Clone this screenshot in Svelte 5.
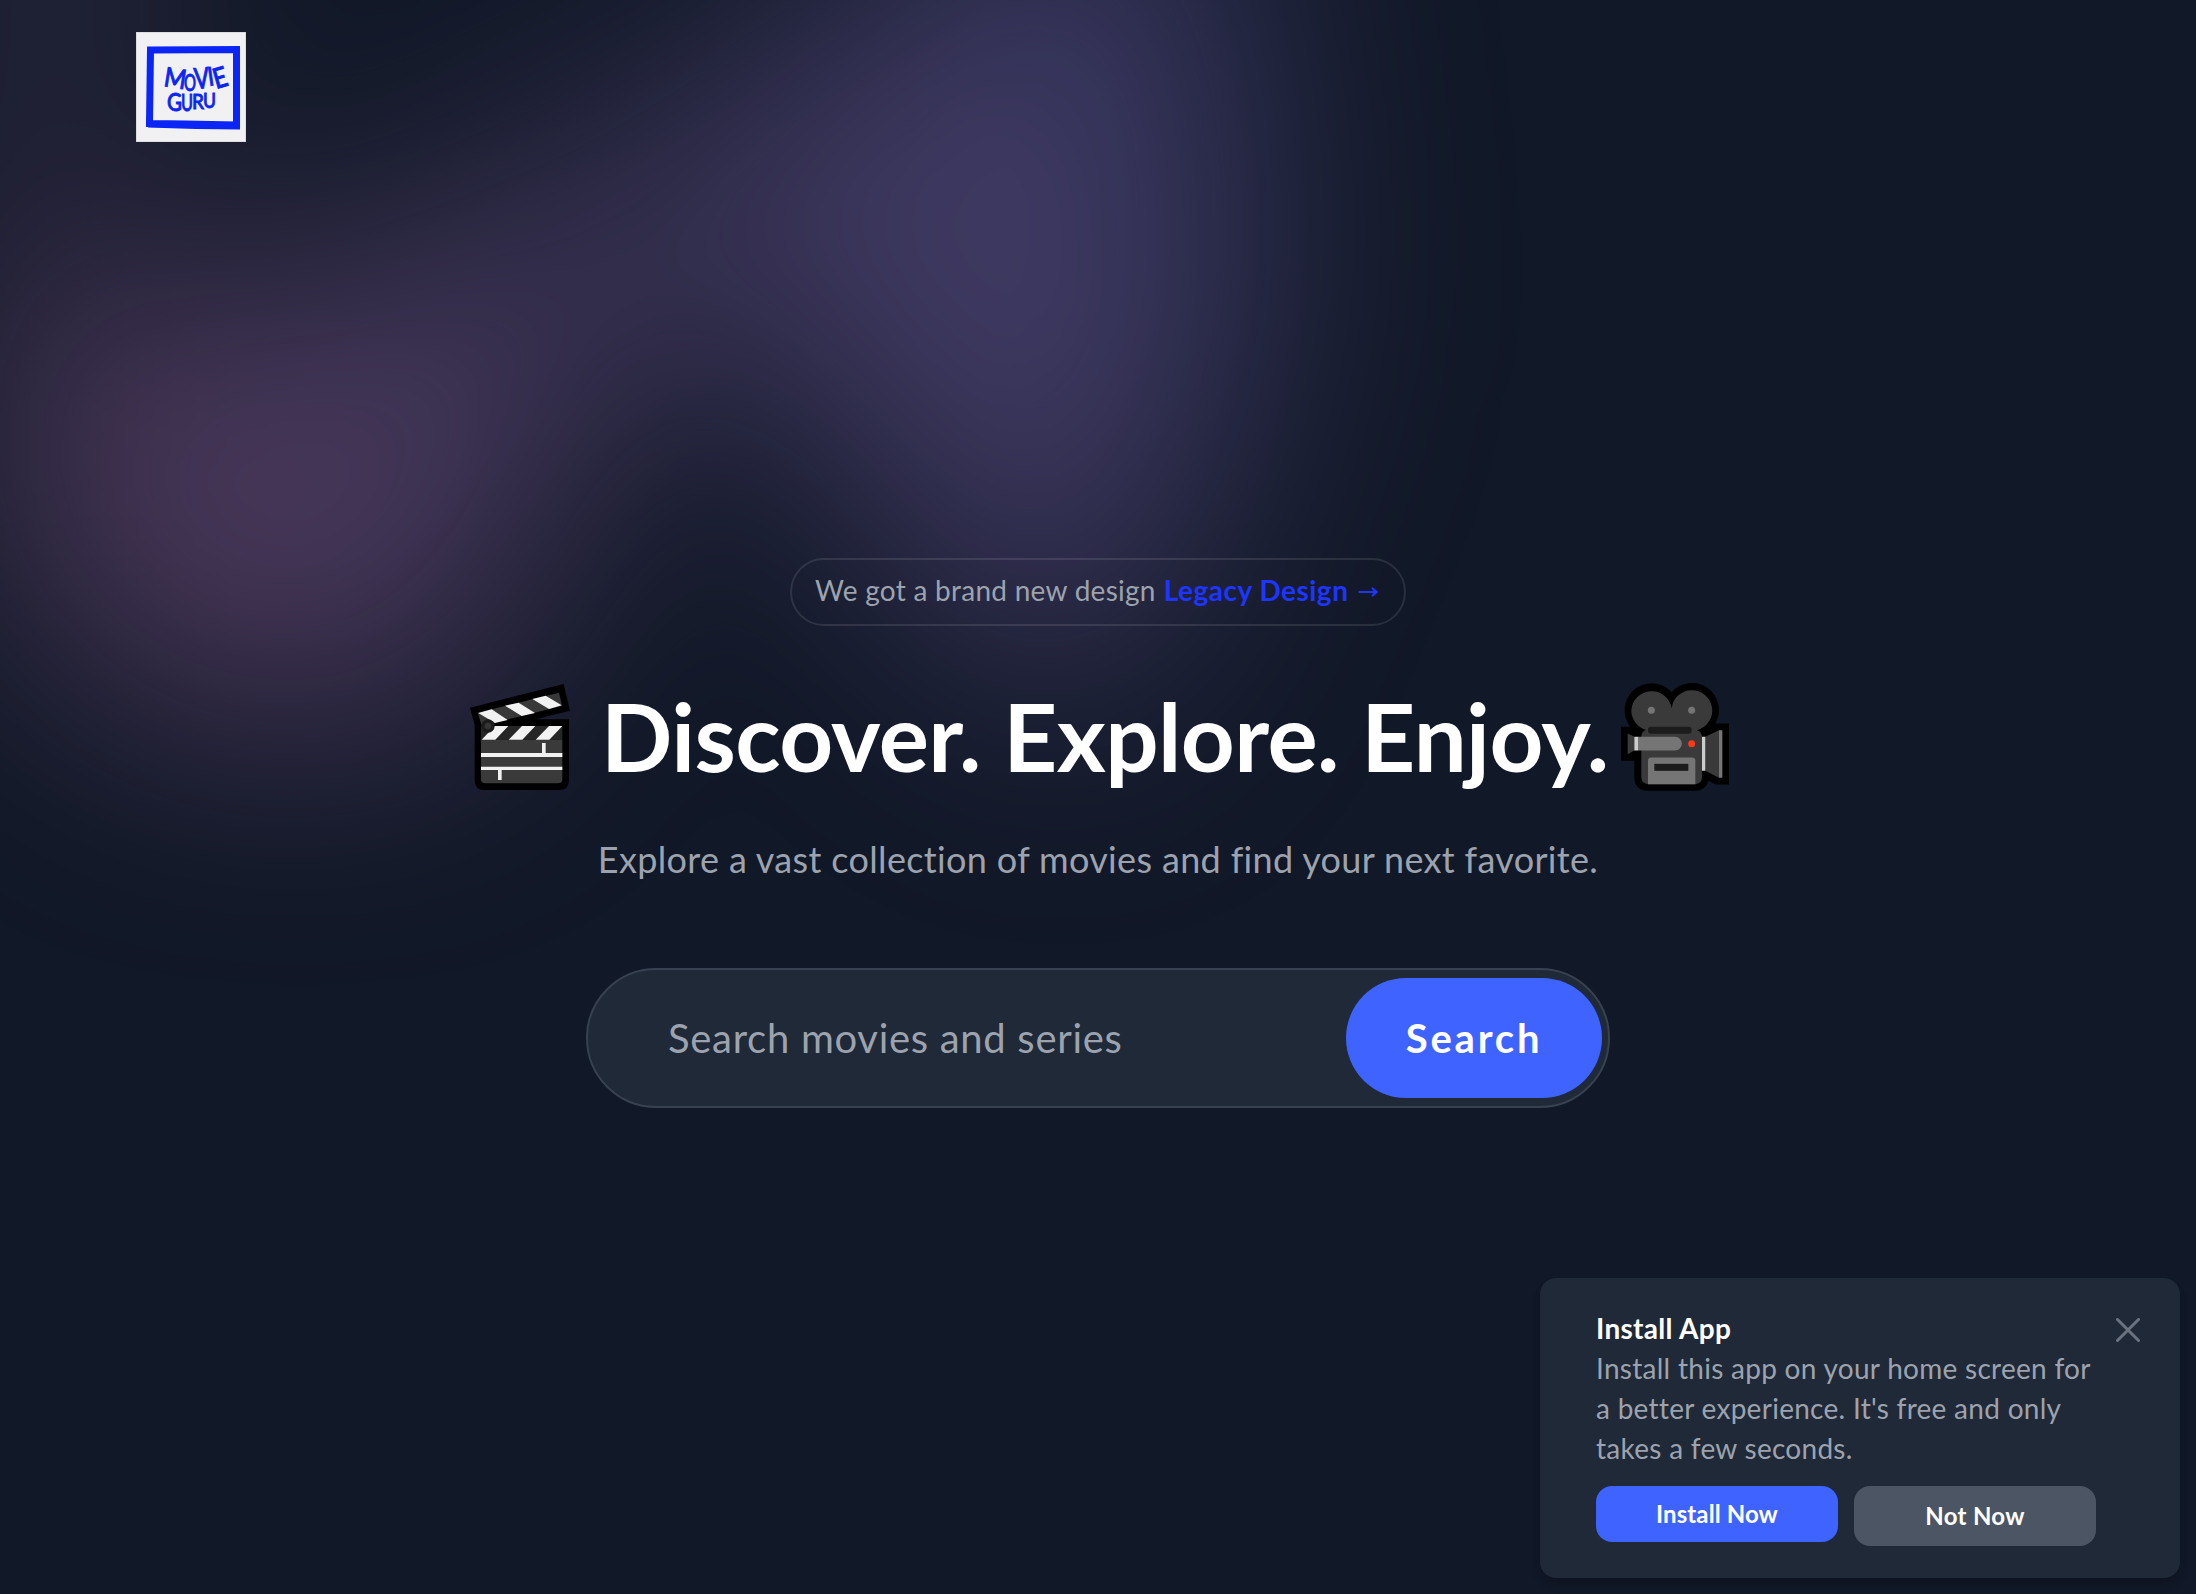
<script>
  let query = $state('');
</script>

<div class="page">
  <div class="aurora" aria-hidden="true"><div class="shape"></div></div>

  <header>
    <a href="#home" class="logo" aria-label="Movie Guru">
      <svg viewBox="0 0 110 110" width="110" height="110">
        <rect x="0" y="0" width="110" height="110" fill="#f1f1f3" stroke="#c9c9cf" />
        <path d="M14.500 18 L100.500 17.500 L100.500 93 L50 92 L13.500 91.500 Z" fill="none" stroke="#0a25f5" stroke-width="7" />
        <path d="M12 94 L60 95.500 L104 96" fill="none" stroke="#0a25f5" stroke-width="3" />
        <g class="scrawl">
          <text x="27" y="54" font-size="27" textLength="22" lengthAdjust="spacingAndGlyphs" transform="rotate(9 27 54)">M</text>
          <text x="48" y="59" font-size="23" textLength="12" lengthAdjust="spacingAndGlyphs">O</text>
          <text x="59" y="57" font-size="29" textLength="15" lengthAdjust="spacingAndGlyphs" transform="rotate(-5 59 57)">V</text>
          <text x="73" y="54" font-size="26" textLength="6" lengthAdjust="spacingAndGlyphs" transform="rotate(-8 73 54)">I</text>
          <text x="80" y="57" font-size="28" textLength="14" lengthAdjust="spacingAndGlyphs" transform="rotate(-16 80 57)">E</text>
          <text x="31" y="79" font-size="25" textLength="15" lengthAdjust="spacingAndGlyphs">G</text>
          <text x="45" y="79" font-size="23" textLength="12" lengthAdjust="spacingAndGlyphs">U</text>
          <text x="56" y="77" font-size="22" textLength="12" lengthAdjust="spacingAndGlyphs">R</text>
          <text x="67" y="76" font-size="22" textLength="13" lengthAdjust="spacingAndGlyphs">U</text>
        </g>
      </svg>
    </a>
  </header>

  <main>
    <div class="pill">
      <span class="note">We got a brand new design</span>
      <a href="#legacy">Legacy Design <svg class="arrow" viewBox="0 0 20 12" width="20" height="12"><path d="M0.500 6H18M14 2L18.500 6L14 10" /></svg></a>
    </div>

    <div class="headline">
      <svg viewBox="45 42 300 318" width="100" height="106" aria-hidden="true">
        <path d="M45 113 L326 42 L345 122 L243 148 H342 V330 Q342 360 312 360 H88 Q59 360 59 330 V165 Z" fill="#000" />
        <path d="M68 128 L312 68 L321 108 L118 158 L80 166 Z" fill="#383838" />
        <path d="M70 129 L110 118 L158 150 L120 159 Z M150 107 L191 98 L240 129 L200 138 Z M232 87 L272 77 L320 106 L282 117 Z" fill="#f2f2f2" />
        <path d="M78 168 H322 V209 H78 Z" fill="#262626" />
        <path d="M78 209 H322 V328 Q322 340 310 340 H90 Q78 340 78 328 Z" fill="#3a3a3a" />
        <path d="M119 168 H160 L121 209 H80 Z M201 168 H241 L202 209 H161 Z M282 168 H322 L283 209 H242 Z" fill="#f2f2f2" />
        <path d="M78 249 H261 V219 H272 V249 H322 V261 H78 Z M78 290 H322 V300 H140 V330 H129 V300 H78 Z" fill="#f2f2f2" />
        <circle cx="99" cy="168" r="20" fill="#1c1c1c" />
        <circle cx="99" cy="168" r="10" fill="#343434" />
      </svg>
      <h1>Discover. Explore. Enjoy.</h1>
      <svg viewBox="62 37 324 323" width="108" height="108" aria-hidden="true">
        <path d="M62 168 H90 Q73 146 73 118 A81 81 0 0 1 214 64 A81 81 0 0 1 345 158 H386 V341 H346 L325 330 Q316 360 284 360 H144 Q102 360 102 318 V270 H62 Z" fill="#000" />
        <path d="M93 118 A61 61 0 0 1 214 112 A61 61 0 1 1 290 178 Q305 182 305 200 V318 Q305 340 284 340 H144 Q123 340 123 318 V198 Q123 183 137 177 A61 61 0 0 1 93 118 Z" fill="#3a3a3a" />
        <rect x="143" y="168" width="131" height="21" rx="10" fill="#1c1c1c" />
        <circle cx="153" cy="118" r="10.500" fill="#757575" /><circle cx="274" cy="118" r="10.500" fill="#757575" />
        <path d="M82 188 L102 198 V239 L82 250 Z M315 198 L356 178 V321 L315 300 Z" fill="#3a3a3a" />
        <path d="M102 198 H113 V239 H102 Z M305 198 H315 V300 H305 Z" fill="#ccc" />
        <path d="M113 198 H224 A20.500 20.500 0 0 1 224 239 H113 Z M356 178 H366 V321 H356 Z" fill="#757575" />
        <circle cx="274" cy="219" r="10.500" fill="#f8391a" />
        <path d="M143 340 V270 Q143 260 153 260 H275 Q285 260 285 270 V340 Z" fill="#757575" />
        <rect x="162" y="279" width="102" height="21" fill="#1c1c1c" />
      </svg>
    </div>

    <p class="lead">Explore a vast collection of movies and find your next favorite.</p>

    <form onsubmit={(e) => e.preventDefault()}>
      <input type="text" placeholder="Search movies and series" bind:value={query} />
      <button type="submit">Search</button>
    </form>
  </main>

  <aside>
    <div class="body">
      <h2>Install App</h2>
      <p>Install this app on your home screen for<br />a better experience. It's free and only<br />takes a few seconds.</p>
      <div class="actions">
        <button class="install">Install Now</button>
        <button class="later">Not Now</button>
      </div>
    </div>
    <button class="close" aria-label="Close">
      <svg viewBox="0 0 24 24" width="24" height="24"><path d="M1.500 1.500L22.500 22.500M22.500 1.500L1.500 22.500" /></svg>
    </button>
  </aside>
</div>

<style>
  :global(body) { background: #111827; }
  .page {
    position: relative;
    isolation: isolate;
    box-sizing: border-box;
    width: 2196px;
    height: 1594px;
    overflow: hidden;
    background: #111827;
    font-family: Lato, "Liberation Sans", sans-serif;
  }
  button, input { font-family: inherit; border: 0; padding: 0; }
  a { text-decoration: none; }
  svg { display: block; flex: none; }

  .aurora {
    position: absolute;
    z-index: -1;
    left: 0;
    right: 0;
    top: -640px;
    overflow: hidden;
    filter: blur(126px);
  }
  .shape {
    position: relative;
    left: calc(50% - 942px);
    width: 2310px;
    aspect-ratio: 1155 / 678;
    transform: translateX(-50%) rotate(30deg);
    background: linear-gradient(to top right, #ff80b5, #9089fc);
    opacity: 0.3;
    clip-path: polygon(74.1% 44.1%, 100% 61.6%, 97.5% 26.9%, 85.5% 0.1%, 80.7% 2%, 72.5% 32.5%, 60.2% 62.4%, 52.4% 68.1%, 47.5% 58.3%, 45.2% 34.5%, 27.5% 76.7%, 0.1% 64.9%, 17.9% 100%, 27.6% 76.8%, 76.1% 97.7%, 74.1% 44.1%);
  }

  header { display: flex; padding: 32px 136px 0; }
  .scrawl { fill: #0a25f5; stroke: #0a25f5; stroke-width: 0.9; font-family: Lato, sans-serif; font-weight: 500; }

  main { display: flex; flex-direction: column; align-items: center; padding-top: 416px; }
  .pill {
    display: flex;
    align-items: center;
    gap: 8px;
    box-sizing: border-box;
    width: 616px;
    height: 68px;
    padding: 0 0 4px 23px;
    border: 2px solid rgba(255, 255, 255, 0.1);
    border-radius: 34px;
    font-size: 28px;
    white-space: nowrap;
    color: #9ca3af;
  }
  .note { letter-spacing: 0.27px; }
  .pill a { display: flex; align-items: center; gap: 10px; color: #1d35ff; font-weight: 700; letter-spacing: 0.5px; }
  .arrow { fill: none; stroke: currentColor; stroke-width: 2.2; margin-top: 4px; }

  .headline { display: flex; align-items: center; width: 1259px; height: 108px; margin: 57px 0 0 3px; }
  h1 {
    flex: 1;
    margin: -2px 0 0 31px;
    color: #fff;
    font-size: 94px;
    line-height: 108px;
    font-weight: 700;
    letter-spacing: -0.55px;
    white-space: nowrap;
  }
  .lead { margin: 44px 0 0; color: #9ca3af; font-size: 36px; line-height: 48px; letter-spacing: 0.34px; }

  form {
    display: flex;
    box-sizing: border-box;
    width: 1024px;
    height: 140px;
    margin: 85px 0 0;
    padding: 8px 6px 8px 80px;
    border: 2px solid #374151;
    border-radius: 70px;
    background: #1f2937;
  }
  input { flex: 1; min-width: 0; outline: 0; background: none; color: #fff; font-size: 40px; letter-spacing: 0.7px; }
  input::placeholder { color: #9ca3af; opacity: 1; }
  form button {
    width: 256px;
    height: 120px;
    border-radius: 60px;
    background: #3f63ff;
    color: #fff;
    font-size: 40px;
    font-weight: 700;
    letter-spacing: 2.800px;
  }

  aside {
    position: absolute;
    right: 16px;
    bottom: 16px;
    display: flex;
    justify-content: space-between;
    box-sizing: border-box;
    width: 640px;
    height: 300px;
    padding: 30px 40px 32px 56px;
    border-radius: 16px;
    background: #1f2937;
    box-shadow: 0 8px 12px -2px rgba(0, 0, 0, 0.12), 0 4px 8px -2px rgba(0, 0, 0, 0.1);
  }
  .body { width: 500px; }
  h2 { margin: 0; color: #fff; font-size: 28px; line-height: 40px; font-weight: 700; letter-spacing: 0.3px; }
  aside p { margin: 0; color: #9ca3af; font-size: 28px; line-height: 40px; letter-spacing: 0.28px; white-space: nowrap; }
  .actions { display: grid; grid-template-columns: 1fr 1fr; gap: 16px; align-items: start; margin-top: 18px; }
  .actions button { padding-bottom: 2px; border-radius: 16px; color: #fff; font-size: 24px; font-weight: 700; letter-spacing: 0.1px; }
  .install { height: 56px; background: #3f63ff; }
  .actions .later { height: 60px; background: #4b5563; letter-spacing: 0.3px; }
  .close { align-self: flex-start; margin-top: 10px; background: none; }
  .close path { fill: none; stroke: #6b7280; stroke-width: 3; stroke-linecap: round; }
</style>
